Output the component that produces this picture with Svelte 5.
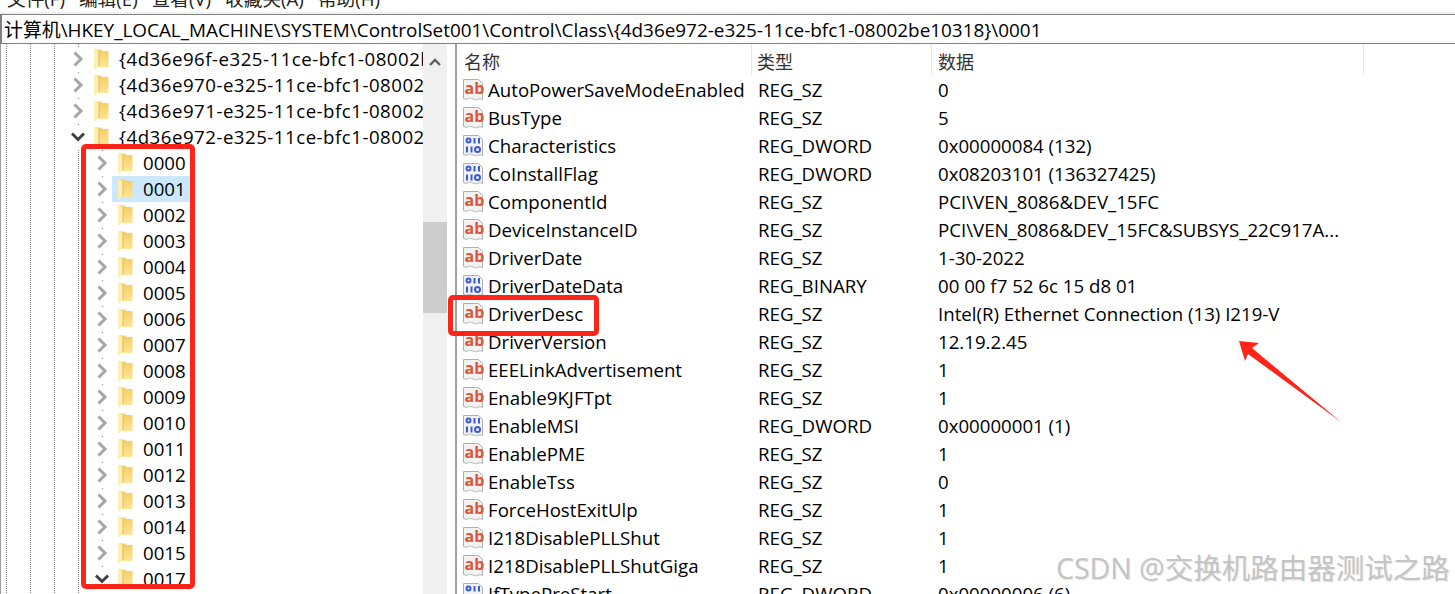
<script>
	const menus = ['文件(F)', '编辑(E)', '查看(V)', '收藏夹(A)', '帮助(H)'];
	const path = '计算机\\HKEY_LOCAL_MACHINE\\SYSTEM\\ControlSet001\\Control\\Class\\{4d36e972-e325-11ce-bfc1-08002be10318}\\0001';

	const parents = [
		{ name: '{4d36e96f-e325-11ce-bfc1-08002be10318}' },
		{ name: '{4d36e970-e325-11ce-bfc1-08002be10318}' },
		{ name: '{4d36e971-e325-11ce-bfc1-08002be10318}' },
		{ name: '{4d36e972-e325-11ce-bfc1-08002be10318}', open: true }
	];
	const children = ['0000', '0001', '0002', '0003', '0004', '0005', '0006', '0007', '0008', '0009', '0010', '0011', '0012', '0013', '0014', '0015', '0017'];

	const values = [
		['AutoPowerSaveModeEnabled', 'REG_SZ', '0'],
		['BusType', 'REG_SZ', '5'],
		['Characteristics', 'REG_DWORD', '0x00000084 (132)'],
		['CoInstallFlag', 'REG_DWORD', '0x08203101 (136327425)'],
		['ComponentId', 'REG_SZ', 'PCI\\VEN_8086&DEV_15FC'],
		['DeviceInstanceID', 'REG_SZ', 'PCI\\VEN_8086&DEV_15FC&SUBSYS_22C917A...'],
		['DriverDate', 'REG_SZ', '1-30-2022'],
		['DriverDateData', 'REG_BINARY', '00 00 f7 52 6c 15 d8 01'],
		['DriverDesc', 'REG_SZ', 'Intel(R) Ethernet Connection (13) I219-V'],
		['DriverVersion', 'REG_SZ', '12.19.2.45'],
		['EEELinkAdvertisement', 'REG_SZ', '1'],
		['Enable9KJFTpt', 'REG_SZ', '1'],
		['EnableMSI', 'REG_DWORD', '0x00000001 (1)'],
		['EnablePME', 'REG_SZ', '1'],
		['EnableTss', 'REG_SZ', '0'],
		['ForceHostExitUlp', 'REG_SZ', '1'],
		['I218DisablePLLShut', 'REG_SZ', '1'],
		['I218DisablePLLShutGiga', 'REG_SZ', '1'],
		['IfTypePreStart', 'REG_DWORD', '0x00000006 (6)']
	];
</script>

{#snippet chevron(open)}
	<span class="chev">
		{#if open}
			<svg width="16" height="12" viewBox="0 0 16 12"><path d="M2 2.5l6 6 6-6" fill="none" stroke="#404040" stroke-width="3" /></svg>
		{:else}
			<svg width="12" height="16" viewBox="0 0 12 16"><path d="M2.500 1.500l6.500 6.500-6.500 6.500" fill="none" stroke="#a6a6a6" stroke-width="3" /></svg>
		{/if}
	</span>
{/snippet}

{#snippet folder()}
	<svg class="folder" width="15" height="21" viewBox="0 0 15 21">
		<path d="M0 .5h7l1.500 1.500h6v16H4z" fill="url(#fold)" />
		<path d="M0 .5l5 1.500v15H4l-1 1.500-3 2.500z" fill="#fdeeb6" />
		<path d="M5 2v15" stroke="#e9b94a" stroke-width="1" />
	</svg>
{/snippet}

<div class="app">
	<svg class="defs" width="0" height="0">
		<defs>
			<linearGradient id="fold" x1="0" y1="0" x2="0" y2="1">
				<stop offset="0" stop-color="#f5cd62" />
				<stop offset="1" stop-color="#fde596" />
			</linearGradient>
		</defs>
	</svg>

	<div class="menu">
		<div class="menu-inner">
			{#each menus as m}
				<span>{m}</span>
			{/each}
		</div>
	</div>

	<div class="address"><div class="path">{path}</div></div>

	<div class="body">
		<div class="tree">
			<div class="tree-scroll">
				{#each parents as p}
					<div class="row depth1">
						{@render chevron(p.open)}
						{@render folder()}
						<span class="label guid">{p.name}</span>
					</div>
				{/each}
				<div class="children">
					{#each children as c}
						<div class="row depth2">
							{@render chevron(c === '0017')}
							{@render folder()}
							<span class="label">{c}</span>
							{#if c === '0001'}<span class="sel-bg"></span>{/if}
						</div>
					{/each}
				</div>
			</div>
			<div class="scrollbar">
				<svg class="up" width="14" height="10" viewBox="0 0 14 10"><path d="M2 8l5-5 5 5" fill="none" stroke="#606060" stroke-width="2.4" /></svg>
				<div class="thumb"></div>
			</div>
		</div>

		<div class="splitter"></div>

		<div class="list">
			<div class="head">
				<div class="col name-col">名称</div>
				<div class="col type-col">类型</div>
				<div class="col data-col">数据</div>
			</div>
			{#each values as v}
				<div class="value">
					<div class="name">
						<svg class="ico" width="22" height="22" viewBox="0 0 22 22">
							<path d="M.5.5h15l4 4v16c-3-2-5 1-8 0s-5-2-8 0l-3-1z" fill="#f2f2f2" stroke="#b0b0b0" />
							{#if v[1] === 'REG_SZ'}
								<text x="1.500" y="15" class="ab">ab</text>
							{:else}
								<g fill="none" stroke="#3b5bd6" stroke-width="2">
									<circle cx="5.500" cy="5.500" r="2" />
									<path d="M11.500 3v5.500M16 3v5.500M4 11.500v6M8.500 11.500v6" />
									<circle cx="14.500" cy="14.500" r="2.500" />
								</g>
							{/if}
						</svg>
						<span>{v[0]}</span>
					</div>
					<div class="type">{v[1]}</div>
					<div class="data">{v[2]}</div>
				</div>
			{/each}
		</div>
	</div>

	<div class="mark tree-mark"></div>
	<div class="mark desc-mark"></div>
	<svg class="arrow" width="110" height="90" viewBox="0 0 110 90">
		<path d="M1 1L21 3 14 8 103 82 10 14 7 21z" fill="#ff2418" />
	</svg>
	<div class="watermark">CSDN @交换机路由器测试之路</div>
</div>

<style>
	:global(body) {
		margin: 0;
		background: #fff;
	}

	.app {
		position: relative;
		width: 1455px;
		height: 594px;
		overflow: hidden;
		background: #fff;
		color: #000;
		font-family: "Open Sans", "Noto Sans CJK SC", sans-serif;
		font-size: 18.67px;
	}

	.defs {
		position: absolute;
	}

	.menu {
		height: 12px;
		overflow: hidden;
		border-bottom: 2px solid #f0f0f0;
	}

	.menu-inner {
		display: flex;
		gap: 14px;
		padding-left: 7px;
		margin-top: -16px;
		line-height: 30px;
		font-size: 18.67px;
		color: #222;
	}

	.address {
		height: 28px;
		border: 1px solid #808080;
		border-left-width: 2px;
		border-right: 0;
		padding-left: 2px;
		overflow: hidden;
	}

	.path {
		line-height: 30px;
		font-size: 18.9px;
		white-space: nowrap;
	}

	.body {
		display: flex;
		height: 550px;
	}

	.tree {
		display: flex;
		width: 447px;
		flex: none;
		border-left: 1px solid #a0a0a0;
		box-sizing: border-box;
	}

	.tree-scroll {
		width: 422px;
		flex: none;
		overflow: hidden;
		padding-top: 2px;
		box-sizing: border-box;
		background-image:
			linear-gradient(#8a8a8a 50%, transparent 50%),
			linear-gradient(#8a8a8a 50%, transparent 50%),
			linear-gradient(#8a8a8a 50%, transparent 50%),
			linear-gradient(#8a8a8a 50%, transparent 50%);
		background-size: 1px 2px;
		background-repeat: repeat-y;
		background-position: 5px 0, 29px 0, 53px 0, 77px 0;
	}

	.children {
		background-image: linear-gradient(#8a8a8a 50%, transparent 50%);
		background-size: 1px 2px;
		background-repeat: repeat-y;
		background-position: 101px 0;
	}

	.row {
		position: relative;
		display: flex;
		align-items: center;
		height: 26px;
		white-space: nowrap;
	}

	.depth1 {
		padding-left: 68px;
	}

	.depth2 {
		padding-left: 92px;
	}

	.chev {
		display: flex;
		align-items: center;
		justify-content: center;
		width: 17px;
		height: 24px;
		margin-right: 8px;
		background: #fff;
		flex: none;
	}

	.folder {
		flex: none;
		position: relative;
		z-index: 1;
	}

	.label {
		margin-left: 10px;
		position: relative;
		z-index: 1;
		line-height: 24px;
		margin-top: 1px;
		margin-bottom: 2px;
	}

	.guid {
		letter-spacing: 0.5px;
	}

	.sel-bg {
		position: absolute;
		left: 111px;
		top: 0;
		width: 78px;
		height: 26px;
		background: #cce8ff;
	}

	.scrollbar {
		width: 24px;
		flex: none;
		background: #f0f0f0;
		display: flex;
		flex-direction: column;
		align-items: center;
	}

	.up {
		margin-top: 13px;
	}

	.thumb {
		width: 100%;
		height: 91px;
		margin-top: 155px;
		background: #cdcdcd;
	}

	.splitter {
		width: 2px;
		border-right: 1px solid #a0a0a0;
		flex: none;
		padding-right: 6px;
		box-sizing: content-box;
	}

	.list {
		flex: 1;
		border-left: 1px solid #a0a0a0;
		min-width: 0;
	}

	.head {
		display: flex;
		height: 31px;
		line-height: 36px;
		font-size: 18px;
		color: #333;
		overflow: hidden;
	}

	.col {
		box-sizing: border-box;
		border-right: 1px solid #e5e5e5;
		flex: none;
	}

	.name-col {
		width: 295px;
		padding-left: 7px;
	}

	.type-col {
		width: 180px;
		padding-left: 5px;
	}

	.data-col {
		width: 432px;
		padding-left: 6px;
	}

	.value {
		display: flex;
		height: 28px;
		align-items: center;
		white-space: nowrap;
	}

	.name {
		display: flex;
		align-items: center;
		width: 294px;
		padding-left: 6px;
		box-sizing: border-box;
		flex: none;
	}

	.ico {
		margin: 2px 3px 0 0;
		flex: none;
	}

	.ab {
		font-family: "Open Sans", sans-serif;
		font-weight: 700;
		font-size: 16px;
		fill: #df5535;
	}

	.type {
		width: 180px;
		padding-left: 7px;
		box-sizing: border-box;
		flex: none;
	}

	.data {
		padding-left: 7px;
	}

	.mark {
		position: absolute;
		border: 5px solid #ff2418;
		border-radius: 5px;
		box-sizing: border-box;
		z-index: 2;
	}

	.tree-mark {
		left: 81px;
		top: 144px;
		width: 114px;
		height: 445px;
	}

	.desc-mark {
		left: 448px;
		top: 295px;
		width: 151px;
		height: 41px;
	}

	.arrow {
		position: absolute;
		left: 1238px;
		top: 340px;
		z-index: 2;
	}

	.watermark {
		position: absolute;
		left: 1056px;
		top: 549px;
		font-size: 28.5px;
		line-height: 38px;
		white-space: nowrap;
		color: #c4c4c4;
		text-shadow: 1px 1px 1px #e4e4e4;
		z-index: 3;
	}
</style>
